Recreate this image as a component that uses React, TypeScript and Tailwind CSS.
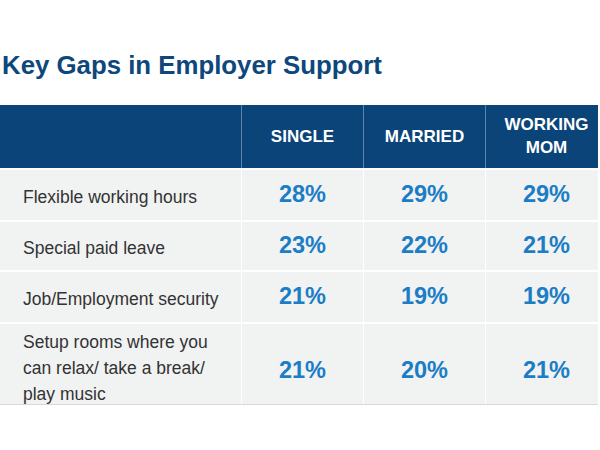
import * as React from "react";

const rows = [
    { label: ["Flexible working hours"], values: ["28%", "29%", "29%"], h: "h-[52px]", pad: "pt-[3px]" },
    { label: ["Special paid leave"], values: ["23%", "22%", "21%"], h: "h-[50px]", pad: "pt-[3px]" },
    { label: ["Job/Employment security"], values: ["21%", "19%", "19%"], h: "h-[52px]", pad: "pt-[3px]" },
    {
        label: ["Setup rooms where you", "can relax/ take a break/", "play music"],
        values: ["21%", "20%", "21%"],
        h: "h-[96px]",
        pad: "pb-[6px]",
    },
];

const font = { fontFamily: "'Liberation Sans', Arial, sans-serif" };

export default function App() {
    return (
        <div className="w-[600px] h-[450px] bg-white overflow-hidden" style={font}>
            <h1 className="pl-[2px] pt-[51px] h-[105px] text-[25.8px] leading-[28px] font-bold text-[#0d477c]">
                Key Gaps in Employer Support
            </h1>
            <div className="w-[598px] h-[300px] overflow-hidden border-b border-[#d8d8d8]">
                <div className="w-[610px]">
                    <div className="grid grid-cols-[241px_122px_122px_122px] h-[63px] bg-[#0b4479] text-white font-bold text-[17px] leading-[23px]">
                        <div />
                        <div className="flex items-center justify-center border-l border-[#5f84ab]">SINGLE</div>
                        <div className="flex items-center justify-center border-l border-[#5f84ab]">MARRIED</div>
                        <div className="flex items-center justify-center text-center border-l border-[#5f84ab] pb-[2px]">
                            WORKING<br />MOM
                        </div>
                    </div>
                    {rows.map((row, i) => (
                        <div
                            key={i}
                            className={`grid grid-cols-[241px_122px_122px_122px] border-t-2 border-white bg-[#f1f2f2] ${row.h}`}
                        >
                            <div className={`flex flex-col justify-center pl-[23px] text-[17.5px] leading-[26px] text-[#333333] whitespace-nowrap ${row.pad}`}>
                                {row.label.map((l, k) => (
                                    <span key={k}>{l}</span>
                                ))}
                            </div>
                            {row.values.map((v, j) => (
                                <div
                                    key={j}
                                    className="flex items-center justify-center border-l border-white text-[23.5px] font-bold text-[#1b7dc6]"
                                >
                                    {v}
                                </div>
                            ))}
                        </div>
                    ))}
                </div>
            </div>
        </div>
    );
}
